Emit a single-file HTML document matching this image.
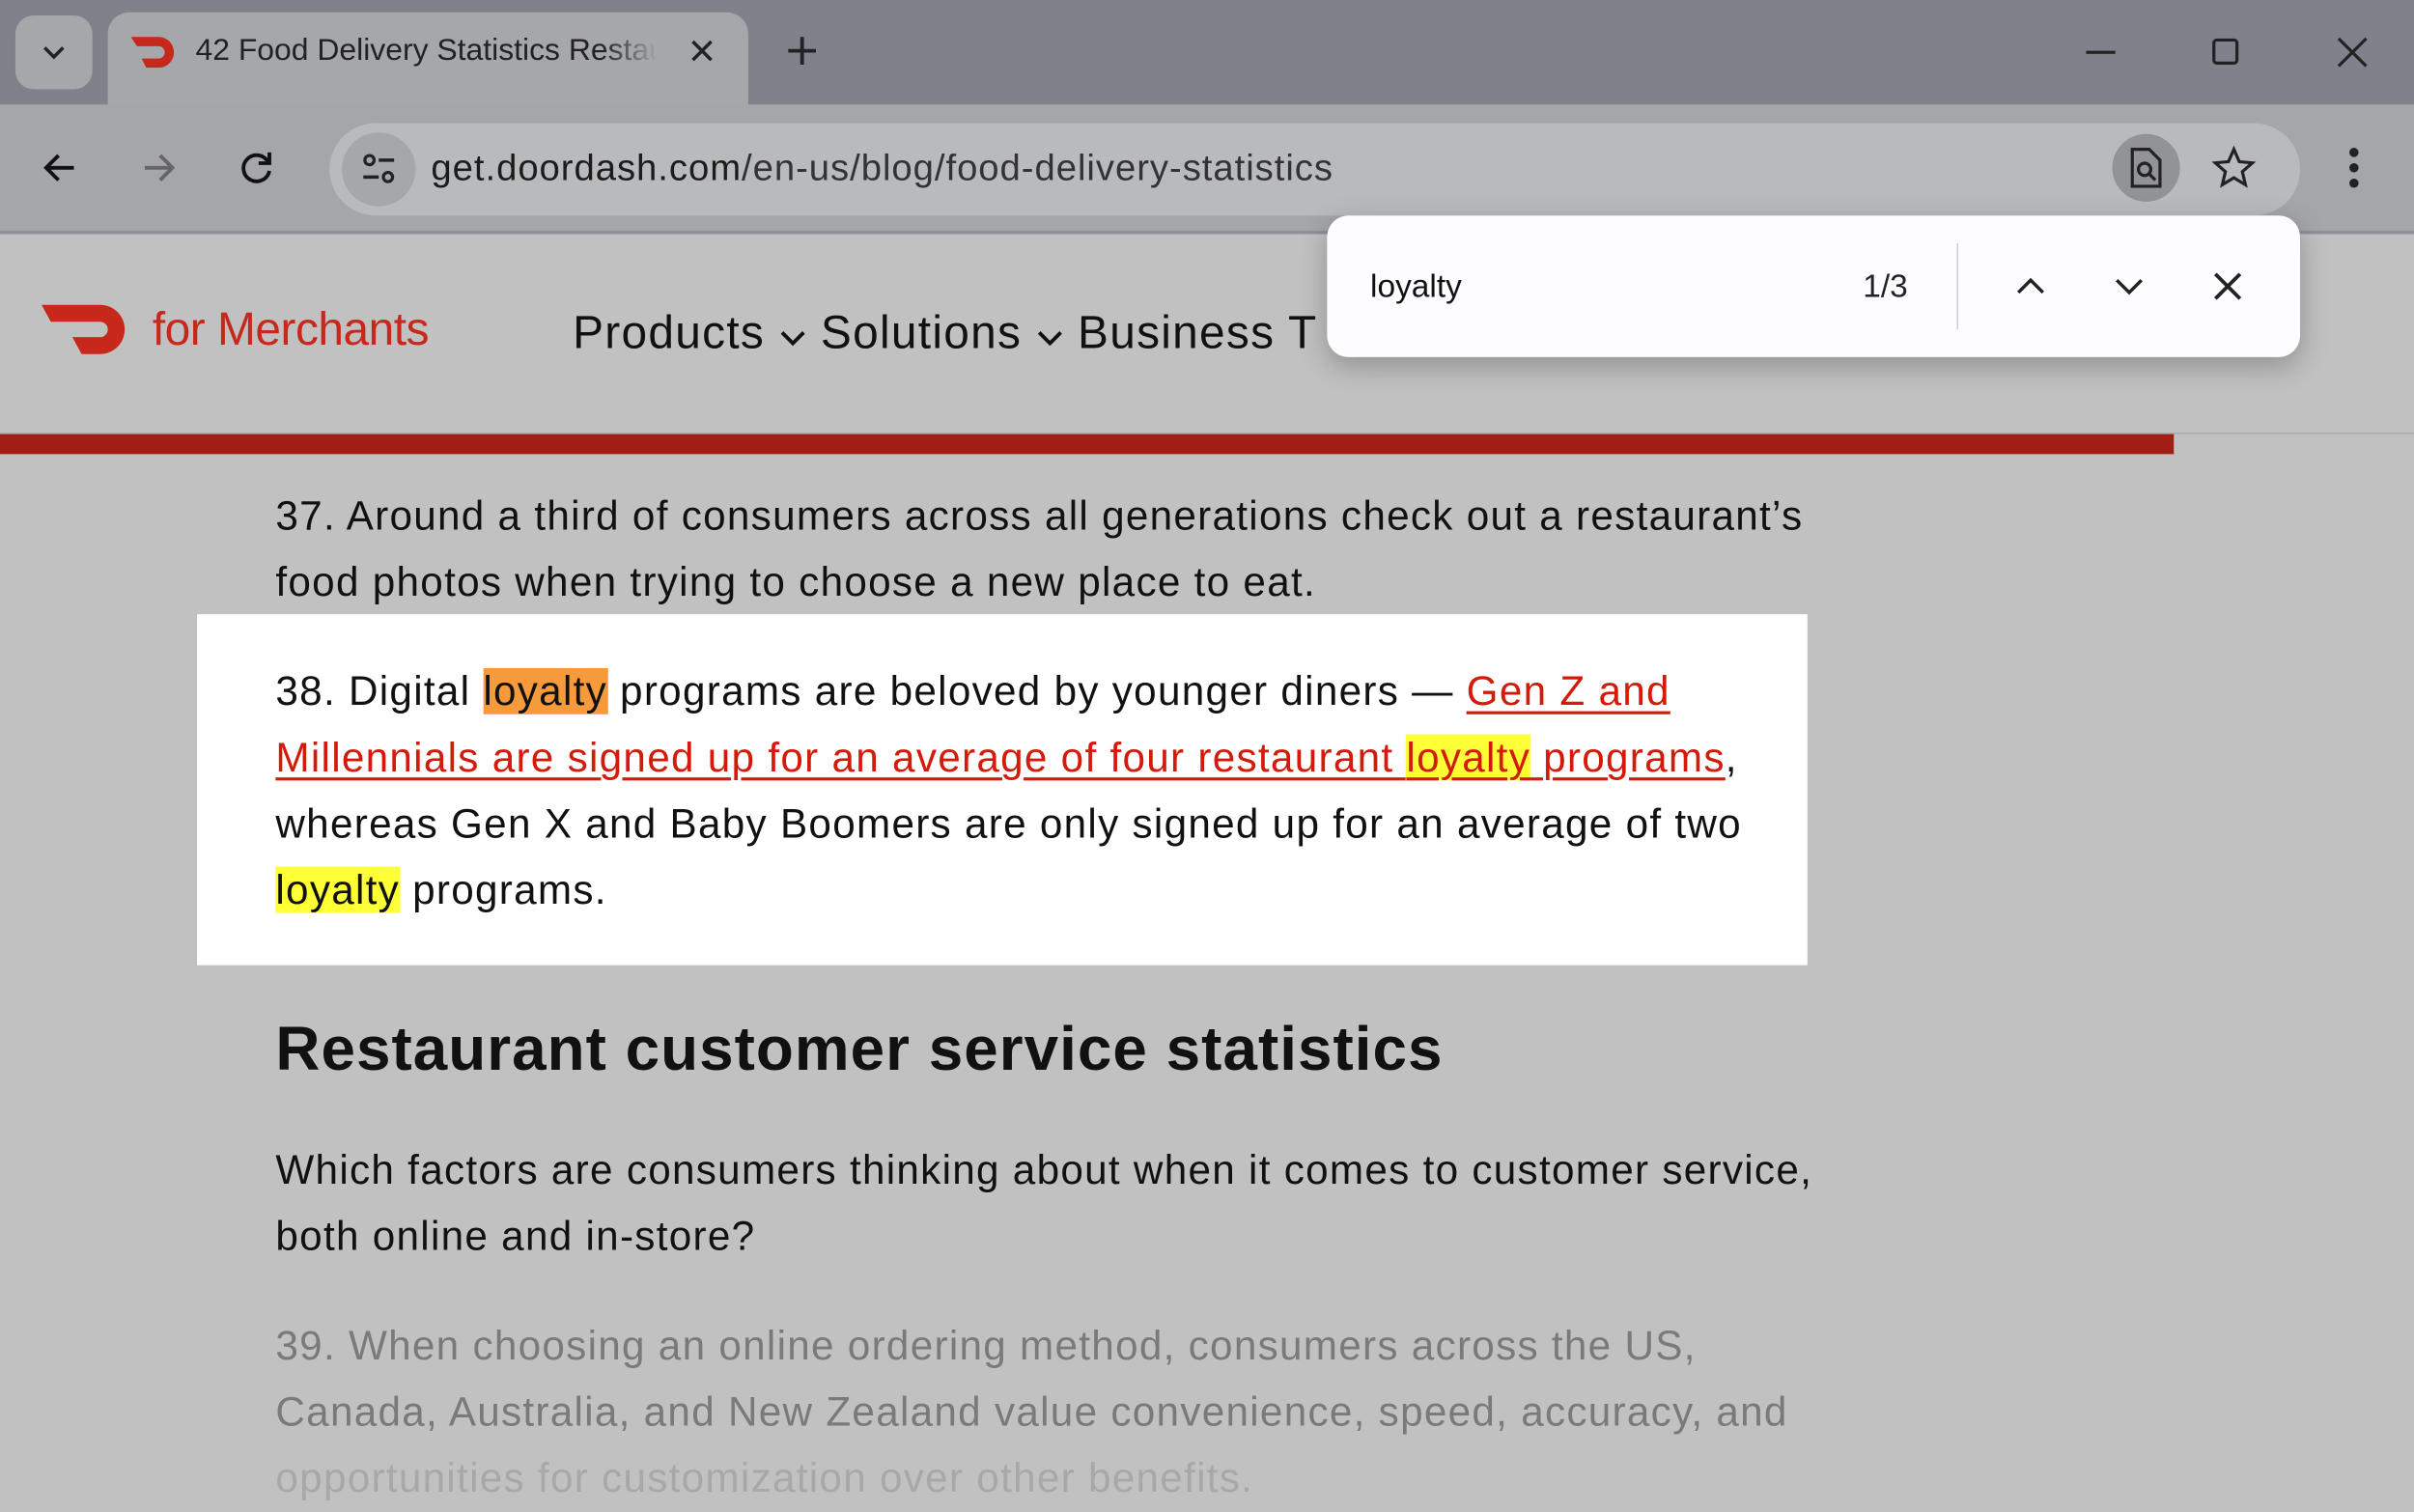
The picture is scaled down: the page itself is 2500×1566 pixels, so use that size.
<!DOCTYPE html>
<html><head><meta charset="utf-8"><style>
*{margin:0;padding:0;box-sizing:border-box}
html,body{width:2500px;height:1562px;overflow:hidden;background:#c1c1c1}
#w{position:absolute;left:0;top:0;width:1568px;height:980px;transform:scale(1.59439);transform-origin:0 0;font-family:"Liberation Sans",sans-serif;color:#111;background:#c1c1c1}
.a{position:absolute}
.t{white-space:nowrap;font-size:26.5px;letter-spacing:0.8px;line-height:43px}
.red{color:#d41a0a;text-decoration:underline;text-decoration-thickness:2px;text-underline-offset:4px}
.or{background:#f79a3c}
.ye{background:#ffff38}
</style></head><body><div id="w">
<!-- title bar -->
<div class="a" style="left:0;top:0;width:1568px;height:68px;background:#7f828a"></div>
<div class="a" style="left:10px;top:10px;width:50px;height:48px;border-radius:12px;background:#a6a7ab"></div>
<svg class="a" style="left:25px;top:24px" width="20" height="20" viewBox="0 0 20 20"><path d="M4 7l6 6 6-6" fill="none" stroke="#222" stroke-width="2.2"/></svg>
<div class="a" style="left:70px;top:8px;width:416px;height:62px;border-radius:14px 14px 0 0;background:#a6a7ab"></div>
<svg class="a" style="left:84px;top:22px" width="32" height="22" viewBox="0 0 32 22"><path d="M1 2h18a10 10 0 0 1 0 20h-8l-3-6h11a4 4 0 0 0 0-8H5z" fill="#c8281c"/></svg>
<div class="a" style="left:127px;top:22px;font-size:20px;color:#222;white-space:nowrap;width:300px;overflow:hidden;-webkit-mask-image:linear-gradient(90deg,#000 88%,transparent)">42 Food Delivery Statistics Restaurants</div>
<svg class="a" style="left:446px;top:23px" width="20" height="20" viewBox="0 0 20 20"><path d="M4 4l12 12M16 4L4 16" stroke="#222" stroke-width="2.2"/></svg>
<svg class="a" style="left:509px;top:21px" width="24" height="24" viewBox="0 0 24 24"><path d="M12 3v18M3 12h18" stroke="#222" stroke-width="2.4"/></svg>
<div class="a" style="left:1355px;top:33px;width:19px;height:2px;background:#222"></div>
<div class="a" style="left:1437px;top:25px;width:17px;height:17px;border:2px solid #222;border-radius:3px"></div>
<svg class="a" style="left:1517px;top:23px" width="22" height="22" viewBox="0 0 22 22"><path d="M2 2l18 18M20 2L2 20" stroke="#222" stroke-width="2"/></svg>
<!-- toolbar -->
<div class="a" style="left:0;top:68px;width:1568px;height:84px;background:#a5a6aa;border-bottom:2px solid #8e8f93"></div>
<svg class="a" style="left:26px;top:96px" width="26" height="26" viewBox="0 0 26 26"><path d="M22 13H5M12 5l-8 8 8 8" fill="none" stroke="#111" stroke-width="2.4"/></svg>
<svg class="a" style="left:90px;top:96px" width="26" height="26" viewBox="0 0 26 26"><path d="M4 13h17M14 5l8 8-8 8" fill="none" stroke="#666" stroke-width="2.4"/></svg>
<svg class="a" style="left:154px;top:96px" width="26" height="26" viewBox="0 0 26 26"><path d="M20 9a8.5 8.5 0 1 0 1 6" fill="none" stroke="#111" stroke-width="2.4"/><path d="M21 3v7h-7" fill="none" stroke="#111" stroke-width="2.4"/></svg>
<div class="a" style="left:214px;top:80px;width:1280px;height:60px;border-radius:30px;background:#b9babc"></div>
<div class="a" style="left:222px;top:86px;width:48px;height:48px;border-radius:24px;background:#a6a7aa"></div>
<svg class="a" style="left:232px;top:96px" width="28" height="28" viewBox="0 0 28 28"><circle cx="8" cy="8" r="3" fill="none" stroke="#222" stroke-width="2"/><path d="M14 8h10M4 19h10" stroke="#222" stroke-width="2.2"/><circle cx="20" cy="19" r="3" fill="none" stroke="#222" stroke-width="2"/></svg>
<div class="a" style="left:280px;top:96px;font-size:24px;color:#1c1c1c;white-space:nowrap;letter-spacing:0.6px">get.doordash.com<span style="color:#333">/en-us/blog/food-delivery-statistics</span></div>
<div class="a" style="left:1372px;top:87px;width:44px;height:44px;border-radius:22px;background:#929396"></div>
<svg class="a" style="left:1382px;top:95px" width="24" height="28" viewBox="0 0 24 28"><path d="M3 2h11l7 7v17H3z" fill="none" stroke="#222" stroke-width="2"/><circle cx="11" cy="15" r="4" fill="none" stroke="#222" stroke-width="2"/><path d="M14 18l4 4" stroke="#222" stroke-width="2"/></svg>
<svg class="a" style="left:1436px;top:94px" width="30" height="30" viewBox="0 0 30 30"><path d="M15 3l3.5 8 8.5.8-6.5 5.7 2 8.5L15 21.5 7.5 26l2-8.5L3 11.8l8.5-.8z" fill="none" stroke="#222" stroke-width="2"/></svg>
<div class="a" style="left:1526px;top:96px;width:6px;height:6px;border-radius:3px;background:#222;box-shadow:0 10px 0 #222,0 20px 0 #222"></div>
<!-- site header -->
<svg class="a" style="left:27px;top:197px" width="60" height="34" viewBox="0 0 60 34"><path d="M0 1h38a16 16 0 0 1 0 32H26l-6-11h18a5 5 0 0 0 0-10H6z" fill="#c8281c"/></svg>
<div class="a" style="left:99px;top:198px;font-size:30px;color:#c8281c;letter-spacing:-0.3px;white-space:nowrap">for Merchants</div>
<div class="a" style="left:372px;top:200px;font-size:30px;color:#111;white-space:nowrap;letter-spacing:0.8px">Products <svg width="18" height="12" viewBox="0 0 18 12"><path d="M2 2l7 7 7-7" fill="none" stroke="#111" stroke-width="2.4"/></svg> Solutions <svg width="18" height="12" viewBox="0 0 18 12"><path d="M2 2l7 7 7-7" fill="none" stroke="#111" stroke-width="2.4"/></svg> Business T</div>
<div class="a" style="left:0;top:281px;width:1568px;height:1px;background:#aaa"></div>
<div class="a" style="left:0;top:282px;width:1412px;height:13px;background:#a01e13"></div>
<!-- find bar -->
<div class="a" style="left:862px;top:140px;width:632px;height:92px;background:#fdfcff;border-radius:14px;box-shadow:0 6px 18px rgba(0,0,0,.25)"></div>
<div class="a" style="left:890px;top:175px;font-size:21px;color:#111">loyalty</div>
<div class="a" style="left:1210px;top:175px;font-size:21px;color:#222">1/3</div>
<div class="a" style="left:1271px;top:158px;width:1px;height:56px;background:#c8d0e0"></div>
<svg class="a" style="left:1308px;top:175px" width="22" height="22" viewBox="0 0 22 22"><path d="M3 15l8-8 8 8" fill="none" stroke="#222" stroke-width="2.2"/></svg>
<svg class="a" style="left:1372px;top:175px" width="22" height="22" viewBox="0 0 22 22"><path d="M3 7l8 8 8-8" fill="none" stroke="#222" stroke-width="2.2"/></svg>
<svg class="a" style="left:1436px;top:175px" width="22" height="22" viewBox="0 0 22 22"><path d="M3 3l16 16M19 3L3 19" stroke="#222" stroke-width="2.4"/></svg>
<!-- content -->
<div class="a t" style="left:179px;top:314px">37. Around a third of consumers across all generations check out a restaurant’s<br>food photos when trying to choose a new place to eat.</div>
<div class="a" style="left:128px;top:399px;width:1046px;height:228px;background:#fff"></div>
<div class="a t" style="left:179px;top:428px">38. Digital <span class="or">loyalty</span> programs are beloved by younger diners — <span class="red">Gen Z and</span><br><span class="red">Millennials are signed up for an average of four restaurant <span class="ye">loyalty</span> programs</span>,<br>whereas Gen X and Baby Boomers are only signed up for an average of two<br><span class="ye">loyalty</span> programs.</div>
<div class="a" style="left:179px;top:660px;font-size:40px;font-weight:bold;white-space:nowrap;letter-spacing:0.65px;color:#111">Restaurant customer service statistics</div>
<div class="a t" style="left:179px;top:739px">Which factors are consumers thinking about when it comes to customer service,<br>both online and in-store?</div>
<div class="a t" style="left:179px;top:853px;color:#7a7a7a">39. When choosing an online ordering method, consumers across the US,<br>Canada, Australia, and New Zealand value convenience, speed, accuracy, and<br><span style="color:#a8a8a8">opportunities for customization over other benefits.</span></div>
</div></body></html>
